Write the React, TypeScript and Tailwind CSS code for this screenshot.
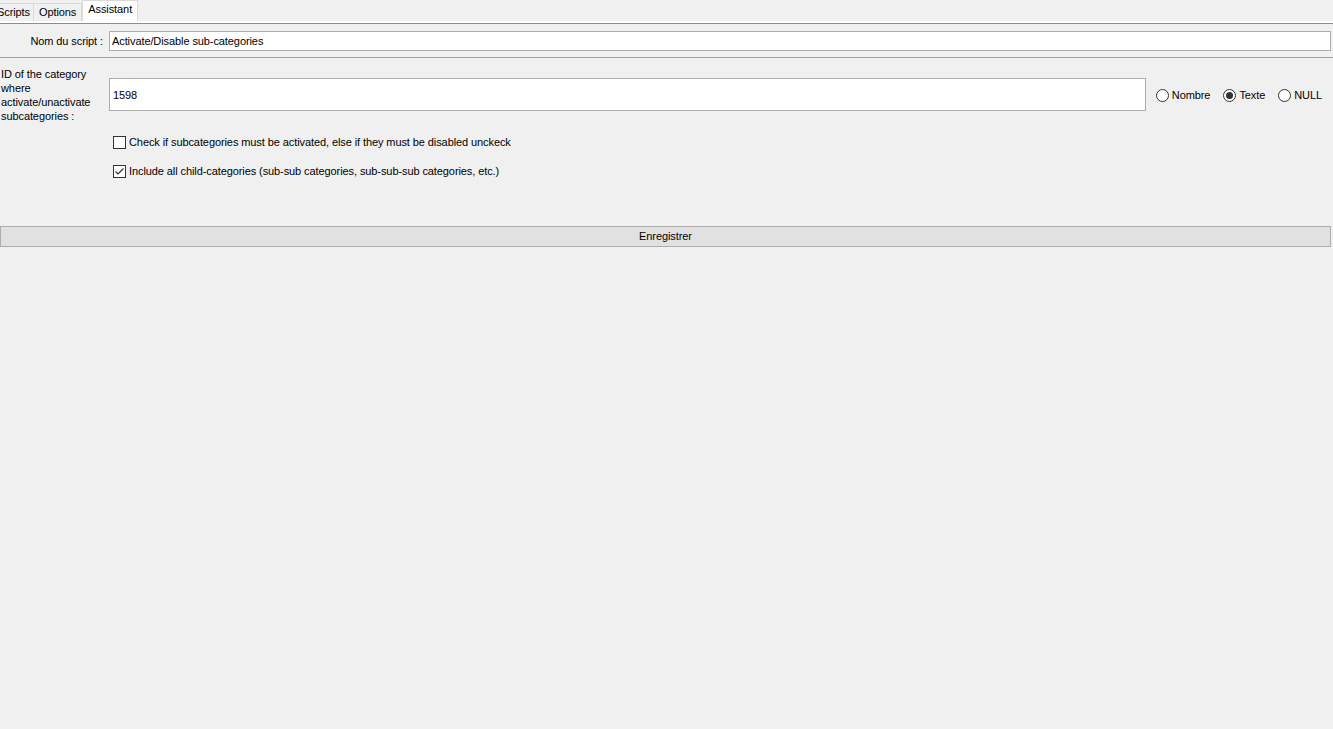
import { useState } from "react";

export default function App() {
  const [nom, setNom] = useState("Activate/Disable sub-categories");
  const [categoryId, setCategoryId] = useState("1598");
  const [typeValeur, setTypeValeur] = useState("texte");
  const [activer, setActiver] = useState(false);
  const [enfants, setEnfants] = useState(true);

  return (
    <div
      className="min-h-screen w-full bg-[#f0f0f0] text-[11px] tracking-[-0.09px] text-black overflow-hidden"
      style={{ fontFamily: '"Liberation Sans", Arial, sans-serif' }}
    >
      {/* Onglets */}
      <div className="flex items-end h-[21px] relative">
        <div className="h-[18px] ml-[-7px] px-[3px] flex items-center border border-b-0 border-[#d9d9d9] bg-[#f0f0f0]">
          Scripts
        </div>
        <div className="h-[18px] px-[5px] flex items-center border border-b-0 border-l-0 border-[#d9d9d9] bg-[#f0f0f0]">
          Options
        </div>
        <div className="h-[21px] px-[5px] pb-[3px] flex items-center border border-b-0 border-[#d9d9d9] bg-white z-10">
          Assistant
        </div>
      </div>
      <div className="h-[3px] bg-white border-b border-[#8c8e94]"></div>

      {/* Nom du script */}
      <div className="flex items-center h-[32px] pt-[2px]">
        <div className="w-[109px] pr-[6px] text-right">Nom du script :</div>
        <input
          value={nom}
          onChange={(e) => setNom(e.target.value)}
          className="h-[20px] flex-1 mr-[2px] px-[2px] bg-white border border-[#adadad] outline-none"
        />
      </div>
      <div className="h-[1px] bg-[#a0a0a0] mt-[1px]"></div>

      {/* ID de la categorie */}
      <div className="flex items-start mt-[9px]">
        <div className="w-[109px] pl-[1px] leading-[14px] pr-[4px]">
          ID of the category where activate/unactivate subcategories :
        </div>
        <input
          value={categoryId}
          onChange={(e) => setCategoryId(e.target.value)}
          className="h-[33px] flex-1 mt-[11px] px-[3px] bg-white border border-[#adadad] outline-none"
        />
        <div className="flex items-center gap-[13px] mt-[20px] ml-[10px] mr-[11px]">
          {[
            { id: "nombre", label: "Nombre" },
            { id: "texte", label: "Texte" },
            { id: "null", label: "NULL" },
          ].map((opt) => (
            <label key={opt.id} className="flex items-center gap-[3px]" onClick={() => setTypeValeur(opt.id)}>
              <span className="w-[13px] h-[13px] rounded-full border border-[#333] bg-white flex items-center justify-center">
                {typeValeur === opt.id && <span className="w-[7px] h-[7px] rounded-full bg-[#333]"></span>}
              </span>
              {opt.label}
            </label>
          ))}
        </div>
      </div>

      {/* Cases a cocher */}
      <div className="ml-[113px] mt-[13px] flex flex-col gap-[16px]">
        <label className="flex items-center gap-[3px] h-[13px]" onClick={() => setActiver(!activer)}>
          <span className="w-[13px] h-[13px] border border-[#333] bg-white flex items-center justify-center">
            {activer && (
              <svg width="11" height="11" viewBox="0 0 11 11">
                <path d="M1.5 5.5 L4 8 L9.5 2.5" fill="none" stroke="#333" strokeWidth="1.2" />
              </svg>
            )}
          </span>
          Check if subcategories must be activated, else if they must be disabled unckeck
        </label>
        <label className="flex items-center gap-[3px] h-[13px]" onClick={() => setEnfants(!enfants)}>
          <span className="w-[13px] h-[13px] border border-[#333] bg-white flex items-center justify-center">
            {enfants && (
              <svg width="11" height="11" viewBox="0 0 11 11">
                <path d="M1.5 5.5 L4 8 L9.5 2.5" fill="none" stroke="#333" strokeWidth="1.2" />
              </svg>
            )}
          </span>
          Include all child-categories (sub-sub categories, sub-sub-sub categories, etc.)
        </label>
      </div>

      {/* Bouton */}
      <button className="mt-[48px] w-[1331px] h-[21px] flex items-center justify-center bg-[#e1e1e1] border border-[#adadad]">
        Enregistrer
      </button>
    </div>
  );
}
